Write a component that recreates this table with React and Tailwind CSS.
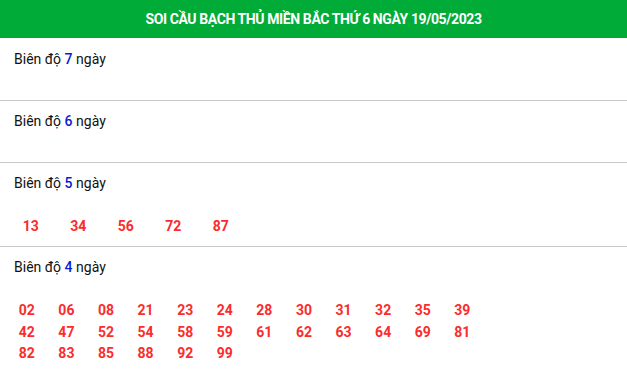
import React from 'react';

const sections = [
  { days: 7, nums: [], h: 'h-[63px]' },
  { days: 6, nums: [], h: 'h-[62px]' },
  { days: 5, nums: ['13', '34', '56', '72', '87'], cell: 'w-[47.5px]', h: 'h-[84px]' },
  {
    days: 4,
    nums: [
      '02', '06', '08', '21', '23', '24', '28', '30', '31', '32', '35', '39',
      '42', '47', '52', '54', '58', '59', '61', '62', '63', '64', '69', '81',
      '82', '83', '85', '88', '92', '99',
    ],
    cell: 'w-[39.6px]',
  },
];

function Section({ days, nums, cell, h, first, last }) {
  return (
    <div className={`${last ? '' : 'border-b border-[#c8c8c8]'} ${h || ''}`}>
      <div className={`pl-[14px] ${first ? 'pt-[12px]' : 'pt-[11px]'} text-[14px] leading-[18px] text-[#111]`}>
        Biên độ <span className="font-medium text-[#0a1bd6]">{days}</span> ngày
      </div>
      {nums.length > 0 && (
        <div className={`flex flex-wrap pl-[7px] pt-[24px] ${last ? 'w-[490px]' : ''}`}>
          {nums.map((n) => (
            <div key={n} className={`${cell} text-center text-[14px] leading-[21.5px] font-bold text-[#fa2c2c]`}>
              {n}
            </div>
          ))}
        </div>
      )}
    </div>
  );
}

export default function App() {
  return (
    <div className="w-[627px] h-[373px] overflow-hidden bg-white" style={{ fontFamily: 'Roboto, "Liberation Sans", sans-serif' }}>
      <div className="h-[38px] bg-[#00ab37] flex items-center justify-center">
        <h1 className="text-white font-bold text-[14px] tracking-[-0.4px]">
          SOI CẦU BẠCH THỦ MIỀN BẮC THỨ 6 NGÀY 19/05/2023
        </h1>
      </div>
      {sections.map((s, i) => (
        <Section key={s.days} {...s} first={i === 0} last={i === sections.length - 1} />
      ))}
    </div>
  );
}
